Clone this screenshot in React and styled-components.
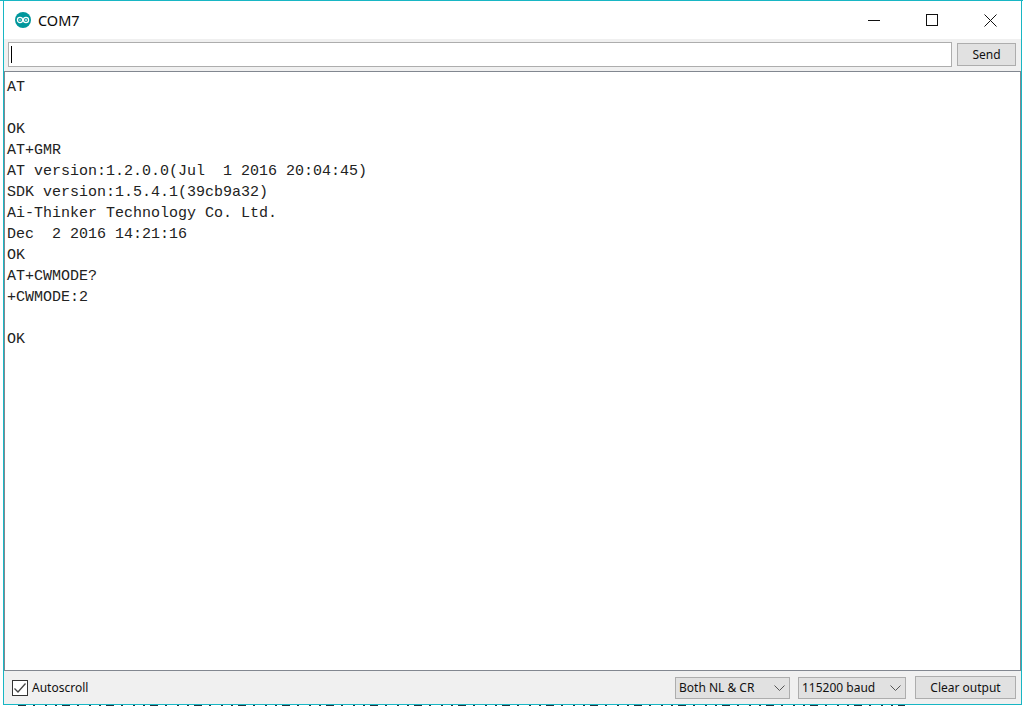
import styled, { createGlobalStyle } from 'styled-components';

const LINES = [
  'AT',
  '',
  'OK',
  'AT+GMR',
  'AT version:1.2.0.0(Jul  1 2016 20:04:45)',
  'SDK version:1.5.4.1(39cb9a32)',
  'Ai-Thinker Technology Co. Ltd.',
  'Dec  2 2016 14:21:16',
  'OK',
  'AT+CWMODE?',
  '+CWMODE:2',
  '',
  'OK',
];

function ArduinoLogo() {
  return (
    <svg width="16" height="16" viewBox="0 0 16 16">
      <circle cx="8" cy="8" r="8" fill="#00979c" />
      <circle cx="5" cy="8" r="2.6" fill="none" stroke="#fff" strokeWidth="1.2" />
      <circle cx="11" cy="8" r="2.6" fill="none" stroke="#fff" strokeWidth="1.2" />
      <path d="M3.8 8h2.2M9.9 8h2.2M11 6.9v2.2" stroke="#fff" strokeWidth="0.8" />
    </svg>
  );
}

function Chevron() {
  return (
    <svg width="11" height="6" viewBox="0 0 11 6">
      <path d="M0.5 0.5L5.5 5.5L10.5 0.5" fill="none" stroke="#555" />
    </svg>
  );
}

function App() {
  return (
    <Page>
      <GlobalStyle />
      <Window>
        <TitleBar>
          <ArduinoLogo />
          <Title>COM7</Title>
          <WindowControls>
            <ControlButton>
              <svg width="12" height="12" viewBox="0 0 12 12">
                <path d="M0 6.5H12" stroke="#111" />
              </svg>
            </ControlButton>
            <ControlButton>
              <svg width="12" height="12" viewBox="0 0 12 12">
                <rect x="0.5" y="0.5" width="11" height="11" fill="none" stroke="#111" />
              </svg>
            </ControlButton>
            <ControlButton>
              <svg width="13" height="13" viewBox="0 0 13 13">
                <path d="M0.5 0.5L12.5 12.5M12.5 0.5L0.5 12.5" stroke="#111" />
              </svg>
            </ControlButton>
          </WindowControls>
        </TitleBar>
        <InputRow>
          <CommandInput>
            <Caret />
          </CommandInput>
          <SendButton>Send</SendButton>
        </InputRow>
        <Output>
          {LINES.map((line, i) => (
            <OutputLine key={i}>{line}</OutputLine>
          ))}
        </Output>
        <BottomBar>
          <Autoscroll>
            <CheckBox>
              <svg width="14" height="14" viewBox="0 0 14 14">
                <path d="M1.5 7.5L5 11L12.5 2.5" fill="none" stroke="#444" strokeWidth="1.3" />
              </svg>
            </CheckBox>
            Autoscroll
          </Autoscroll>
          <BottomControls>
            <Select $width={115}>
              Both NL &amp; CR
              <Chevron />
            </Select>
            <Select $width={108}>
              115200 baud
              <Chevron />
            </Select>
            <ClearButton>Clear output</ClearButton>
          </BottomControls>
        </BottomBar>
      </Window>
      <BehindStrip />
    </Page>
  );
}

const GlobalStyle = createGlobalStyle`
  html, body {
    margin: 0;
    padding: 0;
    background: #fff;
  }
`;

const Page = styled.div`
  box-sizing: border-box;
  width: 1023px;
  height: 706px;
  overflow: hidden;
  border-top: 1px solid #18b6c4;
  background: #fff;
  font-family: 'Noto Sans', 'Open Sans', sans-serif;
  font-size: 12px;
  color: #111;
`;

const Window = styled.div`
  box-sizing: border-box;
  width: 1019px;
  height: 704px;
  margin-left: 3px;
  display: flex;
  flex-direction: column;
  border: 1px solid #18b6c4;
  border-top: none;
  background: #f0f0f0;
`;

const TitleBar = styled.div`
  height: 38px;
  flex: none;
  display: flex;
  align-items: center;
  padding-left: 11px;
  background: #fff;
`;

const Title = styled.span`
  margin-left: 7px;
  font-size: 14.5px;
  color: #0a0a0a;
`;

const WindowControls = styled.div`
  margin-left: auto;
  display: flex;
  height: 100%;
  padding-right: 2px;
`;

const ControlButton = styled.div`
  width: 58px;
  display: flex;
  align-items: center;
  justify-content: center;
`;

const InputRow = styled.div`
  box-sizing: border-box;
  height: 32px;
  flex: none;
  display: flex;
  align-items: center;
  gap: 5px;
  padding: 0 5px 1px 4px;
`;

const CommandInput = styled.div`
  box-sizing: border-box;
  flex: 1;
  height: 25px;
  display: flex;
  align-items: center;
  padding-left: 2px;
  background: #fff;
  border: 1px solid #adadad;
`;

const Caret = styled.div`
  width: 1px;
  height: 17px;
  background: #000;
`;

const SendButton = styled.div`
  box-sizing: border-box;
  width: 59px;
  height: 23px;
  display: flex;
  align-items: center;
  justify-content: center;
  background: #e1e1e1;
  border: 1px solid #adadad;
`;

const Output = styled.div`
  flex: 1;
  padding: 5px 2px 3px;
  background: #fff;
  border: 1px solid #828790;
  font-family: 'Liberation Mono', 'Courier New', monospace;
  font-size: 15px;
  line-height: 21px;
  color: #222;
  white-space: pre;
`;

const OutputLine = styled.div`
  height: 21px;
`;

const BottomBar = styled.div`
  height: 33px;
  flex: none;
  display: flex;
  align-items: center;
  justify-content: space-between;
  padding: 0 5px 0 8px;
`;

const Autoscroll = styled.div`
  display: flex;
  align-items: center;
  gap: 4px;
`;

const CheckBox = styled.div`
  box-sizing: border-box;
  width: 16px;
  height: 16px;
  display: flex;
  align-items: center;
  justify-content: center;
  background: #fff;
  border: 1px solid #333;
`;

const BottomControls = styled.div`
  display: flex;
  align-items: center;
  gap: 8px;
`;

const Select = styled.div`
  box-sizing: border-box;
  width: ${(props) => props.$width}px;
  height: 22px;
  display: flex;
  align-items: center;
  justify-content: space-between;
  padding: 0 4px 0 3px;
  background: #e1e1e1;
  border: 1px solid #adadad;
`;

const ClearButton = styled.div`
  box-sizing: border-box;
  width: 101px;
  height: 23px;
  margin-left: 1px;
  display: flex;
  align-items: center;
  justify-content: center;
  background: #e1e1e1;
  border: 1px solid #adadad;
`;

/* tops of the page behind the window, only a pixel of it is visible */
const BehindStrip = styled.div`
  width: 887px;
  height: 1px;
  margin-left: 18px;
  background: repeating-linear-gradient(
    90deg,
    #24333d 0 8px,
    transparent 8px 15px,
    #24333d 15px 17px,
    transparent 17px 27px,
    #24333d 27px 29px,
    transparent 29px 37px,
    #24333d 37px 39px,
    transparent 39px 44px
  );
`;

export default App;
